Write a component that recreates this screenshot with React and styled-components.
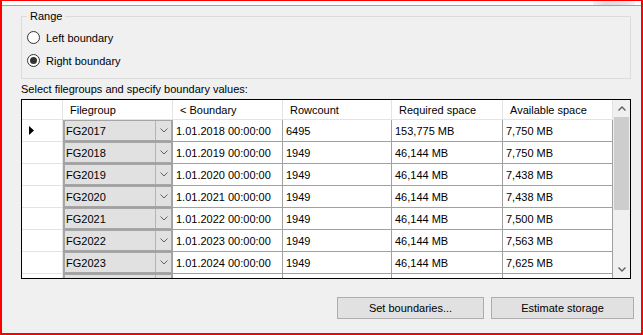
import React from 'react';
import styled, { createGlobalStyle } from 'styled-components';

const GlobalStyle = createGlobalStyle`
    html, body {
        margin: 0;
        padding: 0;
        background: #ffffff;
    }
    body {
        font-family: "Liberation Sans", Arial, sans-serif;
        font-size: 11px;
        color: #000;
    }
`;

const Frame = styled.div`
    box-sizing: border-box;
    width: 643px;
    height: 335px;
    border-style: solid;
    border-color: #ff0000;
    border-width: 1px 2px 2px 2px;
    background: #f0f0f0;
    display: flex;
    flex-direction: column;
    overflow: hidden;
`;

const TopStrip = styled.div`
    height: 4px;
    background: #ffffff;
    border-bottom: 1px solid #a0a0a0;
    display: flex;
    justify-content: flex-end;
`;

const Smudge = styled.div`
    width: 42px;
    height: 4px;
    margin-right: 6px;
    background: linear-gradient(to right, #f4f4f4, #dedede 30%, #e4e4e4 70%, #f4f4f4);
`;

const Content = styled.div`
    display: flex;
    flex-direction: column;
    padding: 10px 10px 0 19px;
`;

const GroupBox = styled.div`
    position: relative;
    border: 1px solid #dcdcdc;
    padding: 10px 0 5px 5px;
`;

const Legend = styled.span`
    position: absolute;
    top: -7px;
    left: 5px;
    padding: 0 3px;
    line-height: 13px;
    background: #f0f0f0;
`;

const RadioRow = styled.label`
    display: flex;
    align-items: center;
    height: 23px;
    gap: 6px;
    margin-top: -1px;
    margin-bottom: 1px;
`;

const RadioCircle = styled.span`
    box-sizing: border-box;
    width: 13px;
    height: 13px;
    border-radius: 50%;
    border: 1px solid #333333;
    background: #ffffff;
    display: flex;
    align-items: center;
    justify-content: center;

    &::after {
        content: '';
        display: ${({ checked }) => (checked ? 'block' : 'none')};
        width: 7px;
        height: 7px;
        border-radius: 50%;
        background: #333333;
    }
`;

const Caption = styled.div`
    margin-top: 3px;
    line-height: 14px;
`;

const GridBox = styled.div`
    box-sizing: border-box;
    margin-top: 3px;
    width: 610px;
    height: 180px;
    border: 1px solid #000000;
    background: #ffffff;
    display: flex;
    overflow: hidden;
`;

const Table = styled.div`
    display: grid;
    grid-template-columns: 41px 110px 110px 109px 111px 110px;
    grid-auto-rows: 22px;
    grid-template-rows: 20px;
    align-content: start;
    overflow: hidden;
`;

const HeadCell = styled.div`
    box-sizing: border-box;
    display: flex;
    align-items: center;
    padding-left: 7px;
    border-right: 1px solid #e3e3e3;
    border-bottom: 1px solid #e3e3e3;
    white-space: nowrap;
`;

const RowHead = styled.div`
    box-sizing: border-box;
    display: flex;
    align-items: center;
    padding-left: 7px;
    border-right: 1px solid #e3e3e3;
    border-bottom: 1px solid #e3e3e3;
`;

const Cell = styled.div`
    box-sizing: border-box;
    display: flex;
    align-items: center;
    padding: 1px 0 0 3px;
    border-right: 1px solid #a0a0a0;
    border-bottom: 1px solid #a0a0a0;
    white-space: nowrap;
`;

const ComboCell = styled.div`
    box-sizing: border-box;
    display: flex;
    border-right: 1px solid #a0a0a0;
    border-bottom: 1px solid #a0a0a0;
`;

const Combo = styled.div`
    flex: 1;
    display: flex;
    background: #e1e1e1;
    border: 1px solid #a6a6a6;
    border-left-width: 2px;
`;

const ComboText = styled.span`
    flex: 1;
    display: flex;
    align-items: center;
    padding: 1px 0 0 1px;
`;

const ComboButton = styled.span`
    width: 15px;
    border-left: 1px solid #b4b4b4;
    display: flex;
    align-items: center;
    justify-content: center;
`;

const ScrollBar = styled.div`
    width: 17px;
    display: flex;
    flex-direction: column;
    background: #f0f0f0;
`;

const ScrollButton = styled.div`
    height: 17px;
    display: flex;
    align-items: center;
    justify-content: center;
`;

const Thumb = styled.div`
    height: 93px;
    margin: 0 1px;
    background: #cdcdcd;
`;

const Spacer = styled.div`
    flex: 1;
`;

const ButtonRow = styled.div`
    display: flex;
    justify-content: flex-end;
    gap: 7px;
    margin-top: 18px;
    margin-right: -3px;
`;

const Button = styled.button`
    box-sizing: border-box;
    width: ${({ w }) => w}px;
    height: 22px;
    background: #e1e1e1;
    border: 1px solid #adadad;
    font-family: "Liberation Sans", Arial, sans-serif;
    font-size: 11px;
    color: #000;
    padding: 0;
`;

const Chevron = ({ up, color = '#606060', width = 1 }) => (
    <svg width="8" height="5" viewBox="0 0 8 5">
        <polyline
            points={up ? '0.5,4.5 4,1 7.5,4.5' : '0.5,0.5 4,4 7.5,0.5'}
            fill="none"
            stroke={color}
            strokeWidth={width}
        />
    </svg>
);

const Pointer = () => (
    <svg width="6" height="9" viewBox="0 0 6 9">
        <polygon points="0,0 5,4.5 0,9" fill="#000" />
    </svg>
);

// the last row is only a sliver under the visible area, so it carries no text
const rows = [
    ['FG2017', '1.01.2018 00:00:00', '6495', '153,775 MB', '7,750 MB'],
    ['FG2018', '1.01.2019 00:00:00', '1949', '46,144 MB', '7,750 MB'],
    ['FG2019', '1.01.2020 00:00:00', '1949', '46,144 MB', '7,438 MB'],
    ['FG2020', '1.01.2021 00:00:00', '1949', '46,144 MB', '7,438 MB'],
    ['FG2021', '1.01.2022 00:00:00', '1949', '46,144 MB', '7,500 MB'],
    ['FG2022', '1.01.2023 00:00:00', '1949', '46,144 MB', '7,563 MB'],
    ['FG2023', '1.01.2024 00:00:00', '1949', '46,144 MB', '7,625 MB'],
    ['', '', '', '', ''],
];

const headers = ['Filegroup', '< Boundary', 'Rowcount', 'Required space', 'Available space'];

const App = () => (
    <Frame>
        <GlobalStyle />
        <TopStrip>
            <Smudge />
        </TopStrip>
        <Content>
            <GroupBox>
                <Legend>Range</Legend>
                <RadioRow>
                    <RadioCircle />
                    Left boundary
                </RadioRow>
                <RadioRow>
                    <RadioCircle checked />
                    Right boundary
                </RadioRow>
            </GroupBox>
            <Caption>Select filegroups and specify boundary values:</Caption>
            <GridBox>
                <Table>
                    <HeadCell />
                    {headers.map((h) => <HeadCell key={h}>{h}</HeadCell>)}
                    {rows.map((r, i) => (
                        <React.Fragment key={i}>
                            <RowHead>{i === 0 && <Pointer />}</RowHead>
                            <ComboCell>
                                <Combo>
                                    <ComboText>{r[0]}</ComboText>
                                    <ComboButton>
                                        <Chevron />
                                    </ComboButton>
                                </Combo>
                            </ComboCell>
                            {r.slice(1).map((v, j) => <Cell key={j}>{v}</Cell>)}
                        </React.Fragment>
                    ))}
                </Table>
                <ScrollBar>
                    <ScrollButton>
                        <Chevron up width={1.4} />
                    </ScrollButton>
                    <Thumb />
                    <Spacer />
                    <ScrollButton>
                        <Chevron width={1.4} />
                    </ScrollButton>
                </ScrollBar>
            </GridBox>
            <ButtonRow>
                <Button w={147}>Set boundaries...</Button>
                <Button w={143}>Estimate storage</Button>
            </ButtonRow>
        </Content>
    </Frame>
);

export default App;
